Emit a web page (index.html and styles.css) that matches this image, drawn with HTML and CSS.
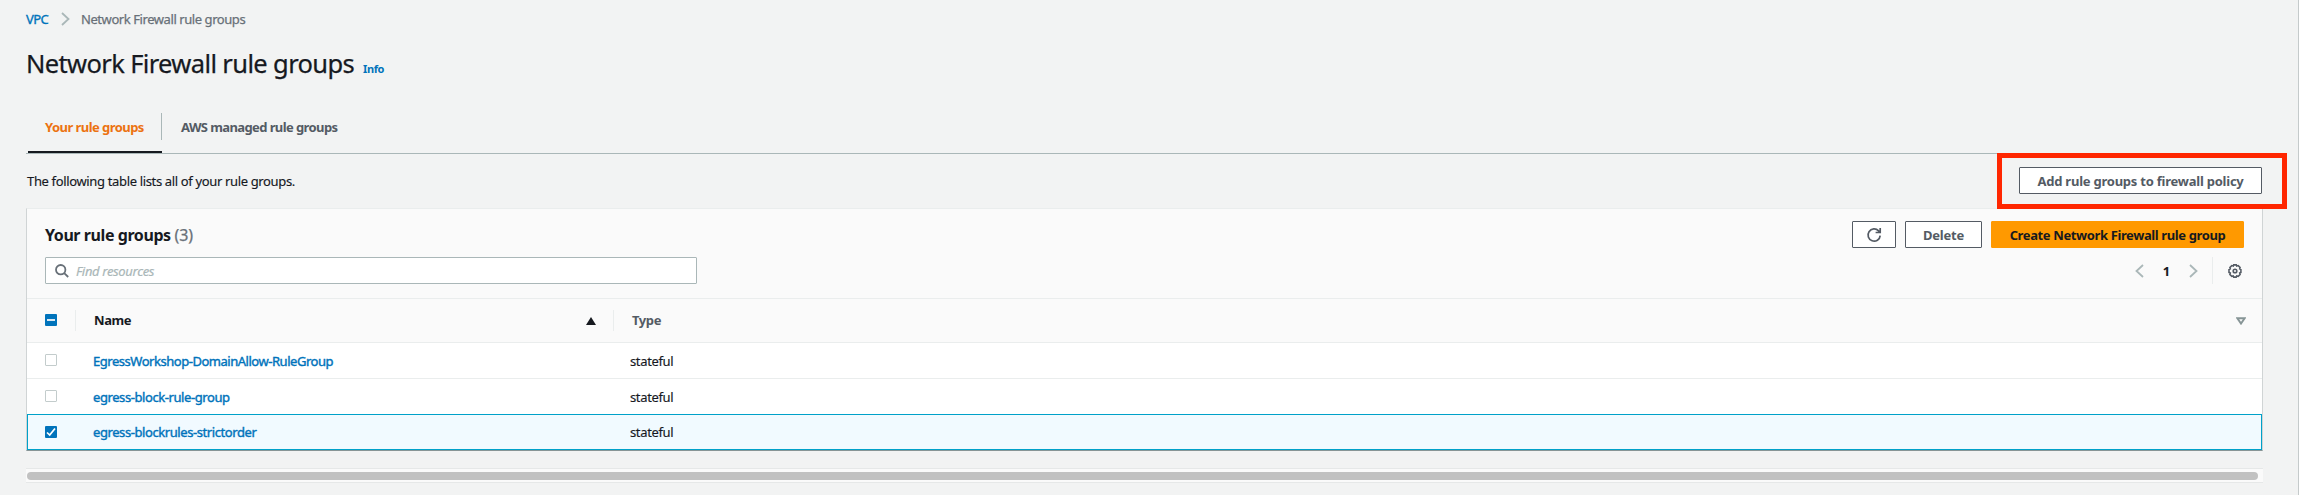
FILE: index.html
```html
<!DOCTYPE html>
<html lang="en">
<head>
<meta charset="utf-8">
<title>Network Firewall rule groups</title>
<link rel="stylesheet" href="styles.css">
</head>
<body>
<main class="page">
  <nav class="breadcrumb">
    <a class="crumb-link" href="#">VPC</a>
    <svg class="crumb-sep" width="9" height="14" viewBox="0 0 9 14"><path d="M1 1l6.5 6L1 13"/></svg>
    <span class="crumb-current">Network Firewall rule groups</span>
  </nav>
  <header class="title-row">
    <h1 class="title">Network Firewall rule groups</h1>
    <a class="info" href="#">Info</a>
  </header>
  <div class="tabs">
    <div class="tab tab-active"><span>Your rule groups</span></div>
    <div class="tab tab-managed"><span>AWS managed rule groups</span></div>
  </div>
  <div class="intro">
    <p class="intro-text">The following table lists all of your rule groups.</p>
    <div class="callout-anchor">
      <button class="btn btn-add"><span>Add rule groups to firewall policy</span></button>
      <div class="callout"></div>
    </div>
  </div>
  <section class="panel">
    <div class="panel-head">
      <h2 class="panel-title"><span>Your rule groups</span> <span class="count">(3)</span></h2>
      <div class="actions">
        <button class="btn btn-refresh" aria-label="Refresh"><svg width="16" height="16" viewBox="0 0 16 16"><path d="M14.2 8.6A6.1 6.1 0 1 1 12.6 3.9L14 5.2M14.2 1v4.5H9.6"/></svg></button>
        <button class="btn btn-delete"><span>Delete</span></button>
        <button class="btn btn-primary"><span>Create Network Firewall rule group</span></button>
      </div>
    </div>
    <div class="filter-row">
      <div class="search">
        <svg width="14" height="14" viewBox="0 0 14 14"><circle cx="5.7" cy="5.7" r="4.7"/><path d="M9.2 9.2l4 3.8"/></svg>
        <span class="placeholder">Find resources</span>
      </div>
      <div class="pager">
        <svg class="chev" width="9" height="14" viewBox="0 0 9 14"><path d="M8 1L1.5 7 8 13"/></svg>
        <span class="page-num">1</span>
        <svg class="chev" width="9" height="14" viewBox="0 0 9 14"><path d="M1 1l6.5 6L1 13"/></svg>
        <span class="pager-rule"></span>
        <svg class="gear" width="14" height="14" viewBox="0 0 14 14"><path d="M5.7.9h2.6l.4 1.1 1.5-.4 1.9 1.9-.4 1.4 1.2.6v2.9l-1.2.6.4 1.5-1.9 1.8-1.5-.4-.5 1.2H5.7l-.5-1.2-1.4.4-1.9-1.8.4-1.5-1.3-.6V5.5l1.3-.6-.4-1.4 1.9-1.9 1.5.4z"/><circle cx="7" cy="7" r="1.8"/></svg>
      </div>
    </div>
    <div class="row thead">
      <div class="cell-check"><span class="check check-on"><svg width="12" height="12" viewBox="0 0 12 12"><path d="M2 6h8"/></svg></span></div>
      <div class="cell-name head-name"><span>Name</span><svg width="10" height="8" viewBox="0 0 10 8"><path d="M5 0L10 8H0z"/></svg></div>
      <div class="cell-type head-type"><span>Type</span><svg width="10" height="8" viewBox="0 0 10 8"><path d="M1.3 1.2h7.4L5 6.5z"/></svg></div>
    </div>
    <div class="row">
      <div class="cell-check"><span class="check"></span></div>
      <div class="cell-name"><a class="link link-long" href="#">EgressWorkshop-DomainAllow-RuleGroup</a></div>
      <div class="cell-type"><span class="state">stateful</span></div>
    </div>
    <div class="row">
      <div class="cell-check"><span class="check"></span></div>
      <div class="cell-name"><a class="link" href="#">egress-block-rule-group</a></div>
      <div class="cell-type"><span class="state">stateful</span></div>
    </div>
    <div class="row row-selected">
      <div class="cell-check"><span class="check check-on"><svg width="12" height="12" viewBox="0 0 12 12"><path d="M2 6.5l2.7 2.6L10 2.5"/></svg></span></div>
      <div class="cell-name"><a class="link" href="#">egress-blockrules-strictorder</a></div>
      <div class="cell-type"><span class="state">stateful</span></div>
    </div>
  </section>
  <div class="scrollbar"><div class="thumb"></div></div>
</main>
</body>
</html>
```
FILE: styles.css
```css
* { box-sizing: border-box; }
body { margin: 0; background: #fff; color: #16191f; font: 13px/20px "Noto Sans", "Open Sans", sans-serif; }
a { color: #0073bb; text-decoration: none; }
svg { display: block; fill: none; flex: none; }
h1, h2, p { margin: 0; }
span, a, h1, p { white-space: nowrap; }
.page { width: 2299px; height: 495px; padding: 0 35px 0 26px; background: #f2f3f3; border-right: 1px solid #c5cacb; overflow: hidden; }
.breadcrumb { display: flex; align-items: center; height: 38px; }
.crumb-link { width: 35px; letter-spacing: -.6px; -webkit-text-stroke: .35px; }
.crumb-sep { margin-right: 11px; }
.crumb-sep path, .chev path { stroke: #aab7b8; stroke-width: 1.8; }
.crumb-current { color: #687078; letter-spacing: -.43px; -webkit-text-stroke: .25px; }
.title-row { display: flex; align-items: baseline; gap: 9px; height: 70px; padding-top: 7px; }
.title { font-size: 25.5px; line-height: 36px; font-weight: 400; letter-spacing: -.63px; width: 328px; -webkit-text-stroke: .25px; }
.info { font-size: 11px; font-weight: 700; letter-spacing: -.4px; }
.tabs { display: flex; height: 46px; border-bottom: 1px solid #aab7b8; padding-left: 2px; }
.tab { position: relative; display: flex; height: 45px; padding: 9px 19px 0 17px; font-weight: 700; color: #545b64; letter-spacing: -.55px; }
.tab-managed { padding-left: 19px; letter-spacing: -.6px; }
.tab-active { width: 134px; color: #ec7211; border-bottom: 2px solid #16191f; }
.tab-active::after { content: ""; position: absolute; right: 0; top: 5px; height: 27px; border-right: 1px solid #aab7b8; }
.intro { display: flex; justify-content: space-between; height: 54px; padding: 13px 1px 0 0; }
.intro-text { padding: 4px 0 0 1px; letter-spacing: -.35px; -webkit-text-stroke: .15px; }
.callout-anchor { position: relative; height: 27px; }
.callout { position: absolute; left: -22px; top: -14px; width: 290px; height: 56px; border: 5px solid #ff2600; }
.btn { display: flex; align-items: center; justify-content: center; height: 27px; padding: 0; border: 1px solid #545b64; border-radius: 1px; background: #fff; color: #545b64; font: 700 13px/20px "Noto Sans", "Open Sans", sans-serif; letter-spacing: -.23px; }
.btn-add { width: 243px; }
.btn-refresh { width: 44px; }
.btn-refresh path { stroke: #545b64; stroke-width: 1.7; }
.btn-delete { width: 77px; }
.btn-primary { width: 253px; background: #ff9900; border-color: #ff9900; color: #16191f; letter-spacing: -.38px; }
.panel { width: 2237px; height: 243px; background: #fff; border: 1px solid #d0d4d5; border-top-color: #eaeded; border-bottom-color: #879596; }
.panel-head { display: flex; justify-content: space-between; height: 48px; padding: 12px 18px 0; background: #fafafa; }
.panel-title { font-size: 16px; line-height: 29px; letter-spacing: -.42px; }
.count { color: #687078; font-weight: 400; letter-spacing: -.1px; -webkit-text-stroke: .25px; }
.actions { display: flex; gap: 9px; }
.filter-row { display: flex; justify-content: space-between; height: 41px; padding: 0 20px 0 18px; background: #fafafa; }
.search { display: flex; align-items: center; gap: 7px; width: 652px; height: 27px; padding-left: 9px; background: #fff; border: 1px solid #aab7b8; border-radius: 1px; }
.search svg { stroke: #687078; stroke-width: 1.8; }
.placeholder { color: #aab7b8; font-style: italic; letter-spacing: -.33px; -webkit-text-stroke: .2px; }
.pager { display: flex; align-items: center; height: 27px; }
.page-num { width: 45px; text-align: center; font-weight: 700; }
.pager-rule { height: 27px; margin: 0 15px 0 14px; border-left: 1px solid #eaeded; }
.gear { stroke: #545b64; stroke-width: 1.6; }
.row { display: grid; grid-template-columns: 49px 538px 1fr; height: 36px; border-top: 1px solid #eaeded; }
.row > div { display: flex; align-items: center; }
.thead { height: 44px; background: #fafafa; font-weight: 700; align-items: center; letter-spacing: -.4px; }
.thead > div { height: 21px; }
.thead > div > span:not(.check) { padding-bottom: 1px; }
.cell-check { padding: 0 0 1px 18px; }
.thead .cell-check, .head-name { border-right: 1px solid #eaeded; }
.cell-name { padding-left: 17px; }
.head-name { padding: 0 17px 0 18px; justify-content: space-between; }
.head-name svg { fill: #16191f; }
.cell-type { padding-left: 16px; }
.head-type { color: #545b64; padding: 0 16px 0 18px; justify-content: space-between; }
.head-type svg { stroke: #879596; stroke-width: 2; }
.check { width: 12px; height: 12px; background: #fff; border: 1px solid #c3cccc; border-radius: 1px; }
.check-on { border: 0; background: #0073bb; }
.check-on path { stroke: #fff; stroke-width: 1.7; }
.link { letter-spacing: -.42px; -webkit-text-stroke: .4px; }
.link-long { letter-spacing: -.47px; }
.state { letter-spacing: -.36px; -webkit-text-stroke: .15px; }
.row-selected { border: 1px solid #00a1c9; background: #f1faff; grid-template-columns: 48px 538px 1fr; }
.row-selected .cell-check { padding-left: 17px; }
.scrollbar { width: 2237px; height: 15px; margin-top: 17px; padding: 3px 5px 3px 1px; background: #fafafa; border-top: 1px solid #e6e8e8; border-bottom: 1px solid #e6e8e8; }
.thumb { height: 8px; border-radius: 4px; background: #c1c1c1; }
```
